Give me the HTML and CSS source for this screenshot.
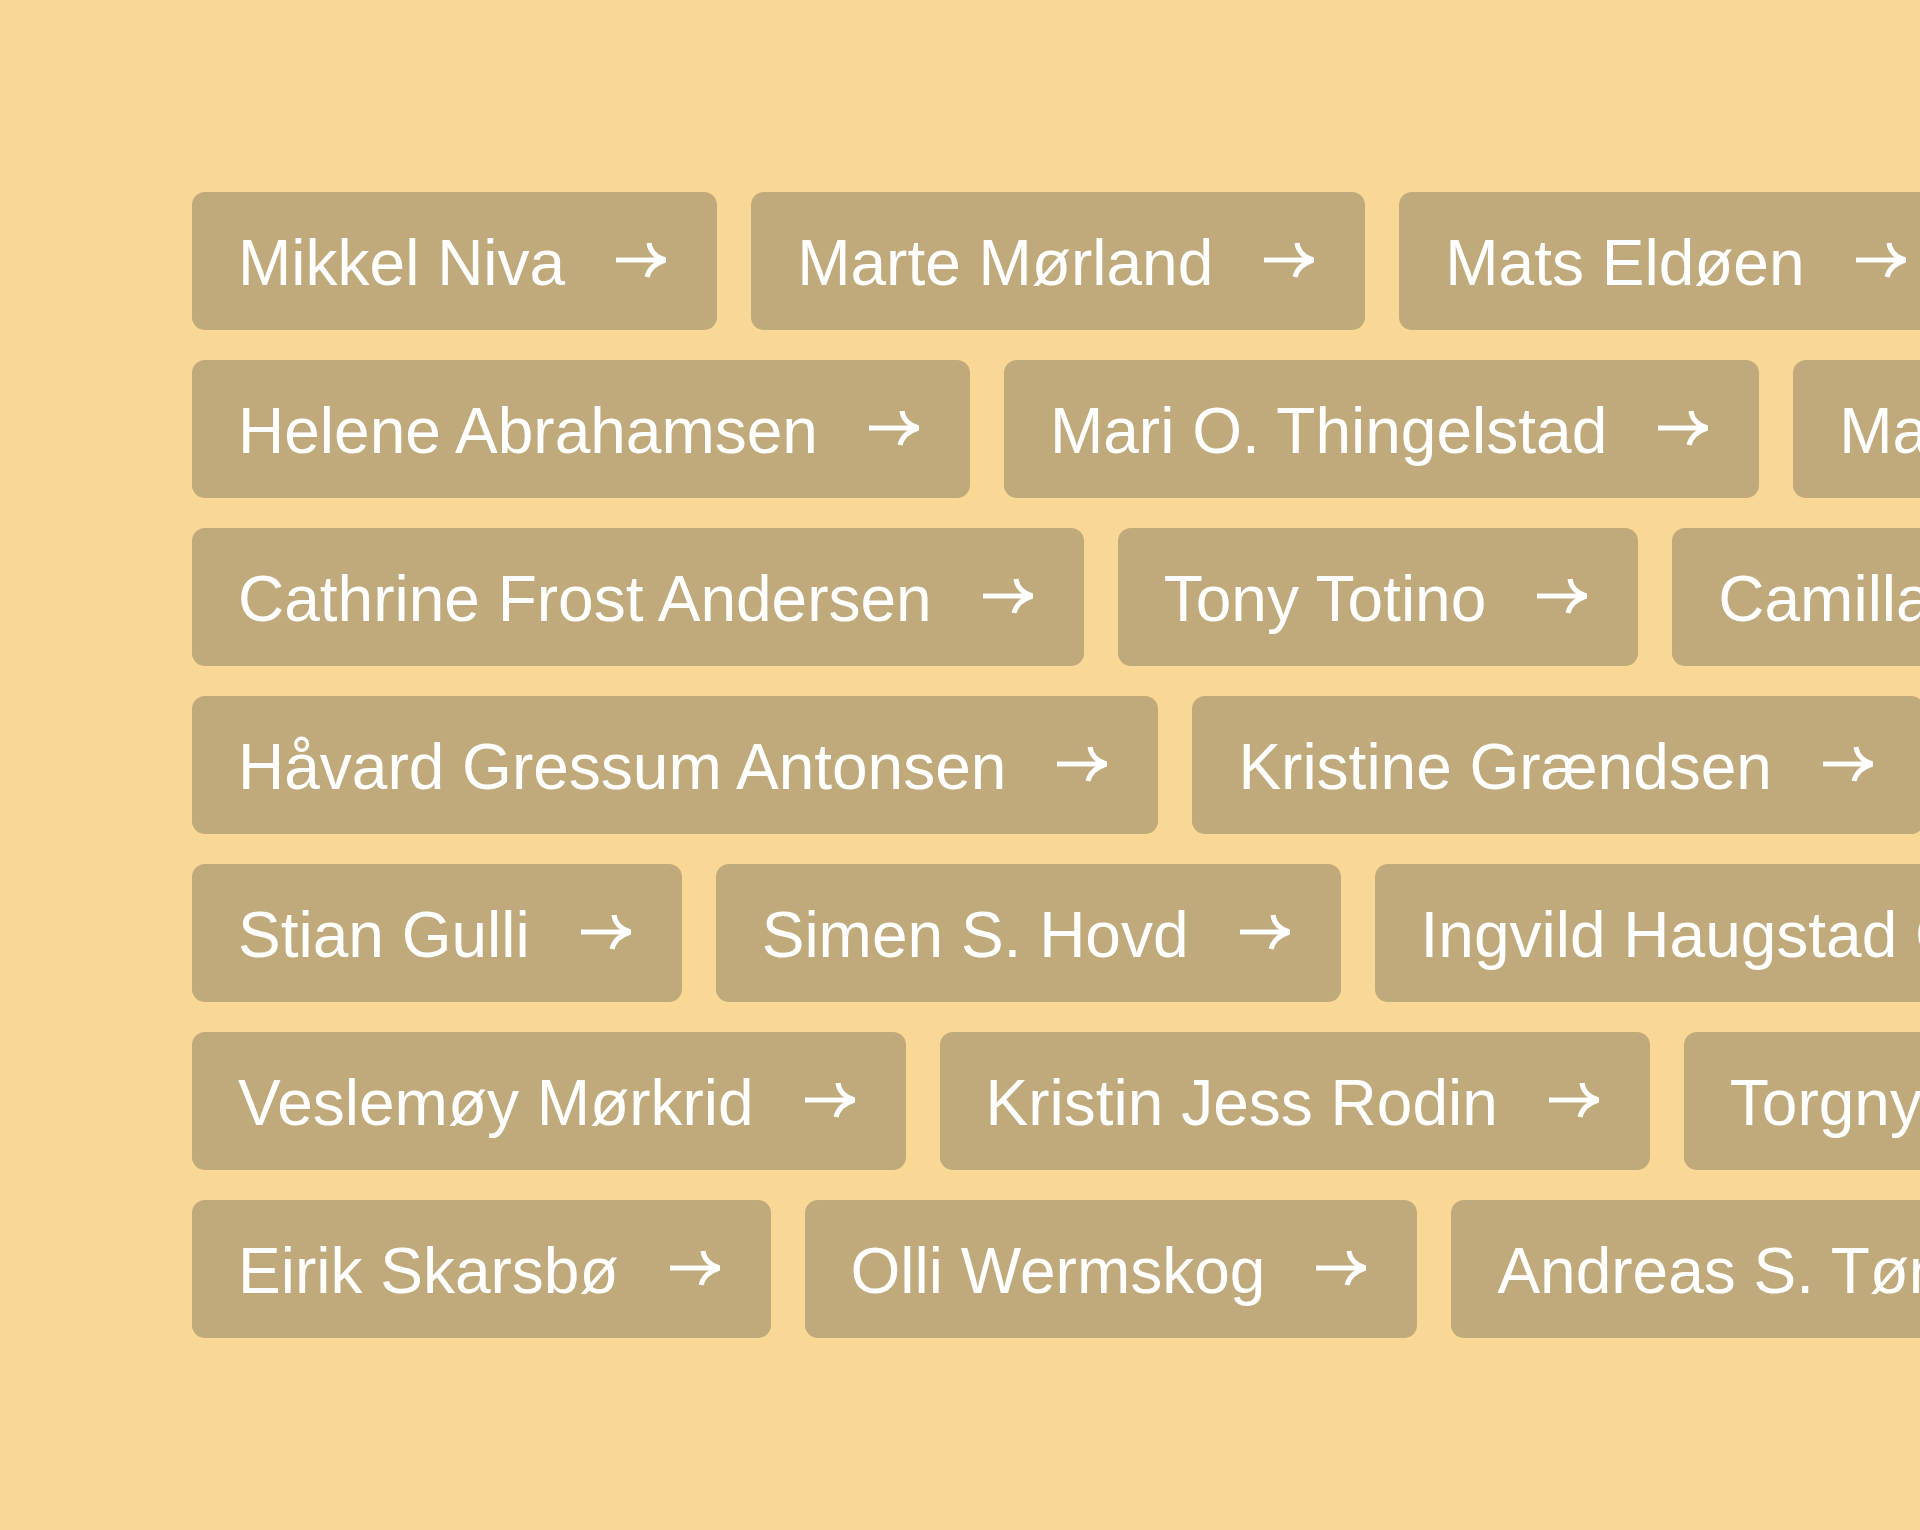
FILE: index.html
```html
<!DOCTYPE html>
<html>
<head>
  <title>Medarbeidere</title>
  <link rel="stylesheet" href="styles.css">
</head>
<body>
  <svg class="defs" width="0" height="0">
    <symbol id="arrow" viewBox="0 0 50 36">
      <path d="M0 18 H47" />
      <path d="M33 1 C34 9 40 15 49.5 18 C40 21 33 27 31 35" />
    </symbol>
  </svg>

  <div id="people">
    <div class="row">
      <a class="person" href="#">Mikkel Niva <svg class="arrow"><use href="#arrow"/></svg></a>
      <a class="person" href="#">Marte Mørland <svg class="arrow"><use href="#arrow"/></svg></a>
      <a class="person" href="#">Mats Eldøen <svg class="arrow"><use href="#arrow"/></svg></a>
    </div>
    <div class="row">
      <a class="person" href="#">Helene Abrahamsen <svg class="arrow"><use href="#arrow"/></svg></a>
      <a class="person" href="#">Mari O. Thingelstad <svg class="arrow"><use href="#arrow"/></svg></a>
      <a class="person" href="#">Marianne Berg <svg class="arrow"><use href="#arrow"/></svg></a>
    </div>
    <div class="row">
      <a class="person" href="#">Cathrine Frost Andersen <svg class="arrow"><use href="#arrow"/></svg></a>
      <a class="person" href="#">Tony Totino <svg class="arrow"><use href="#arrow"/></svg></a>
      <a class="person" href="#">Camilla Skaug <svg class="arrow"><use href="#arrow"/></svg></a>
    </div>
    <div class="row">
      <a class="person" href="#">Håvard Gressum Antonsen <svg class="arrow"><use href="#arrow"/></svg></a>
      <a class="person" href="#">Kristine Grændsen <svg class="arrow"><use href="#arrow"/></svg></a>
    </div>
    <div class="row">
      <a class="person" href="#">Stian Gulli <svg class="arrow"><use href="#arrow"/></svg></a>
      <a class="person" href="#">Simen S. Hovd <svg class="arrow"><use href="#arrow"/></svg></a>
      <a class="person" href="#">Ingvild Haugstad Gjerde <svg class="arrow"><use href="#arrow"/></svg></a>
    </div>
    <div class="row">
      <a class="person" href="#">Veslemøy Mørkrid <svg class="arrow"><use href="#arrow"/></svg></a>
      <a class="person" href="#">Kristin Jess Rodin <svg class="arrow"><use href="#arrow"/></svg></a>
      <a class="person" href="#">Torgny Hansen <svg class="arrow"><use href="#arrow"/></svg></a>
    </div>
    <div class="row">
      <a class="person" href="#">Eirik Skarsbø <svg class="arrow"><use href="#arrow"/></svg></a>
      <a class="person" href="#">Olli Wermskog <svg class="arrow"><use href="#arrow"/></svg></a>
      <a class="person" href="#">Andreas S. Tønnessen <svg class="arrow"><use href="#arrow"/></svg></a>
    </div>
  </div>
</body>
</html>
```

FILE: styles.css
```css
/* Staff list: rows of name buttons running off the right edge */
html, body {
  margin: 0;
  overflow: hidden;
}

body {
  min-height: 1530px;
  background-color: #f9d794;
  font-family: 'Liberation Sans', Arial, sans-serif;
}

.defs {
  position: absolute;
}

#people {
  display: flex;
  flex-direction: column;
  gap: 30px;
  padding: 192px 0 0 192px;
}

.row {
  display: flex;
  gap: 34px;
  white-space: nowrap;
}

.person {
  display: flex;
  flex-shrink: 0;
  align-items: center;
  box-sizing: border-box;
  height: 138px;
  padding: 4px 51px 0 46px;
  border-radius: 13px;
  background-color: #c0a97a;
  color: #fff;
  font-size: 64px;
  line-height: 64px;
  text-decoration: none;
}

.arrow {
  flex-shrink: 0;
  width: 50px;
  height: 36px;
  margin: 0 0 6px 51px;
  fill: none;
  stroke: #fff;
  stroke-width: 5;
}
```
